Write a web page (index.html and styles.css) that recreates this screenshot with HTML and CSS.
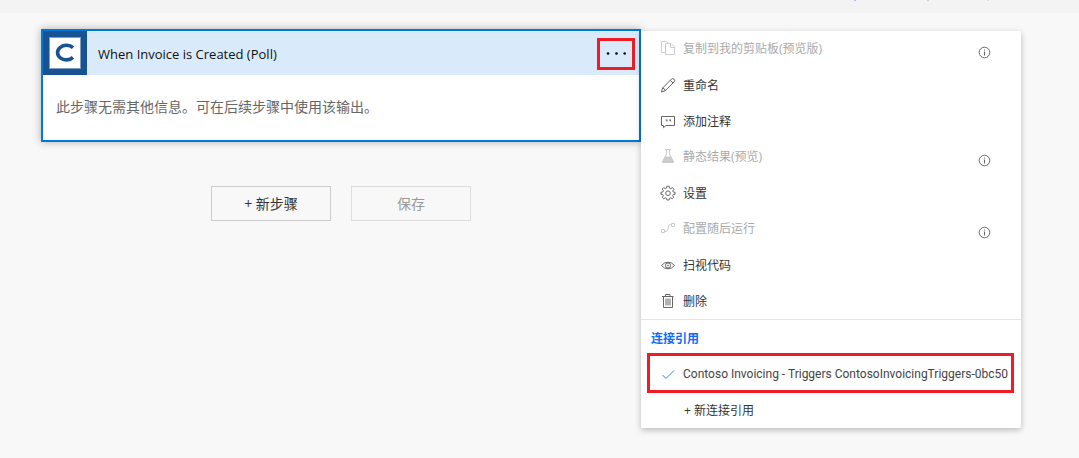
FILE: index.html
```html
<!DOCTYPE html>
<html lang="zh-CN">
<head>
<meta charset="utf-8">
<title>When Invoice is Created (Poll)</title>
<meta name="viewport" content="width=device-width, initial-scale=1">
<link rel="stylesheet" href="styles.css">
</head>
<body>
<header class="topbar"><i class="tick tick-blue"></i><i class="tick"></i><i class="tick tick-faint"></i></header>
<main class="designer">
  <div class="flow">
    <section class="card">
      <header class="card-header">
        <svg class="logo" viewBox="0 0 44 44" aria-hidden="true">
          <rect width="44" height="44" fill="#175293"/>
          <rect x="6" y="6" width="32" height="32" fill="#7f9dc2"/>
          <rect x="7" y="7" width="30" height="30" fill="#fff"/>
          <path d="M30 16.800A8.800 7.300 0 1 0 30 26.400" fill="none" stroke="#175293" stroke-width="3.600"/>
        </svg>
        <h1 class="card-title">When Invoice is Created (Poll)</h1>
        <button class="more" type="button" aria-label="更多">
          <svg width="20" height="4" viewBox="0 0 20 4"><circle cx="2" cy="1.500" r="1.300"/><circle cx="10.500" cy="1.500" r="1.300"/><circle cx="18.700" cy="1.500" r="1.300"/></svg>
        </button>
      </header>
      <p class="card-body">此步骤无需其他信息。可在后续步骤中使用该输出。</p>
    </section>
    <div class="actions">
      <button class="action" type="button">+ 新步骤</button>
      <button class="action" type="button" disabled>保存</button>
    </div>
  </div>
  <div class="menu">
    <div class="group">
      <button class="item" type="button" disabled>
        <svg class="icon" viewBox="0 0 16 16"><path d="M5.500 12.500H1.500V1.500H6.500L8.500 3.500M5.500 3.500H11L14.500 7V14.500H5.500ZM10.500 3.500V7.500H14.500"/></svg>
        <span class="label">复制到我的剪贴板(预览版)</span>
        <svg class="info" viewBox="0 0 13 13"><circle cx="6.500" cy="6.500" r="5.300"/><path d="M6.500 5.500V9.500M6.500 3.500V4.500"/></svg>
      </button>
      <button class="item" type="button">
        <svg class="icon" viewBox="0 0 16 16"><path d="M1.500 15L2.600 11L11.500 2.100Q12.800 1 14.100 2.200Q15.300 3.500 14.200 4.800L5.300 13.700ZM10.300 3.300L13 6M2.600 11Q4.800 11.400 5.300 13.700"/></svg>
        <span class="label">重命名</span>
      </button>
      <button class="item" type="button">
        <svg class="icon" viewBox="0 0 16 16"><path d="M1.500 3.500H14.500V12.500H6L3.500 14.700V12.500H1.500Z"/><path d="M5.500 7H7.500M6.900 7V8.500M9 7H11M10.400 7V8.500"/></svg>
        <span class="label">添加注释</span>
      </button>
      <button class="item" type="button" disabled>
        <svg class="icon" viewBox="0 0 16 16"><path d="M5 1.500H11M6.500 1.500V6L2.500 14H13.500L9.500 6V1.500"/><path class="solid" d="M5 9H11L13.700 14.500H2.300Z"/></svg>
        <span class="label">静态结果(预览)</span>
        <svg class="info" viewBox="0 0 13 13"><circle cx="6.500" cy="6.500" r="5.300"/><path d="M6.500 5.500V9.500M6.500 3.500V4.500"/></svg>
      </button>
      <button class="item" type="button">
        <svg class="icon" viewBox="0 0 16 16"><path d="M6.800 1.300H9.200L9.600 3.200L10.800 3.700L12.400 2.600L14 4.300L12.800 5.900L13.200 7L15 7.300V9.300L13.200 9.600L12.700 10.800L13.700 12.400L12.200 13.900L10.600 12.800L9.500 13.300L9.100 15H6.900L6.500 13.300L5.400 12.800L3.800 13.900L2.300 12.400L3.300 10.800L2.800 9.600L1 9.300V7.300L2.800 7L3.300 5.700L2.200 4.100L3.700 2.600L5.300 3.700L6.400 3.200Z"/><circle cx="8" cy="8.200" r="2.300"/></svg>
        <span class="label">设置</span>
      </button>
      <button class="item" type="button" disabled>
        <svg class="icon" viewBox="0 0 16 16"><path d="M1.500 9.500H4.500V12.500H1.500ZM11.500 3.500H14.500V6.500H11.500ZM4.500 11.500H6Q7.200 11.500 7.600 10L8.800 6Q9.200 4.500 10.400 4.500H11.500"/></svg>
        <span class="label">配置随后运行</span>
        <svg class="info" viewBox="0 0 13 13"><circle cx="6.500" cy="6.500" r="5.300"/><path d="M6.500 5.500V9.500M6.500 3.500V4.500"/></svg>
      </button>
      <button class="item" type="button">
        <svg class="icon" viewBox="0 0 16 16"><path d="M1.500 8.500Q4 5.200 8 5.200T14.500 8.500Q12 11.800 8 11.800T1.500 8.500Z"/><circle cx="8" cy="8.500" r="2.600"/><circle class="solid" cx="8" cy="8.500" r=".4"/></svg>
        <span class="label">扫视代码</span>
      </button>
      <button class="item" type="button">
        <svg class="icon" viewBox="0 0 16 16"><path d="M2 3.500H13.500M5.500 3.500V1.500H10V3.500M3.500 3.500V14.500H12.500V3.500M6 5.500V12.500M8 5.500V12.500M10 5.500V12.500"/></svg>
        <span class="label">删除</span>
      </button>
    </div>
    <div class="group connections">
      <h2 class="menu-heading">连接引用</h2>
      <button class="item selected" type="button">
        <svg class="icon check" viewBox="0 0 16 16"><path d="M2.500 9L6 12.500L14 4.500"/></svg>
        <span class="label">Contoso Invoicing - Triggers ContosoInvoicingTriggers-0bc50</span>
      </button>
      <button class="item new-item" type="button"><span class="label">+ 新连接引用</span></button>
    </div>
  </div>
</main>
</body>
</html>
```
FILE: styles.css
```css
* {
  box-sizing: border-box;
}

body {
  margin: 0;
  min-height: 100vh;
  background: #f8f8f8;
  color: #333;
  font-family: "Open Sans", "Noto Sans CJK SC", sans-serif;
  font-size: 12px;
}

button {
  border: 0;
  padding: 0;
  background: none;
  color: inherit;
  font: inherit;
}

.topbar {
  display: flex;
  justify-content: flex-end;
  gap: 58px;
  height: 13px;
  padding-right: 90px;
  background: #f3f3f3;
}

.tick {
  width: 2px;
  height: 1px;
  background: #ccc;
}

.tick-blue {
  margin-right: 13px;
  background: #b9b3ff;
}

.tick-faint {
  background: #ddd;
}

.designer {
  display: flex;
  align-items: flex-start;
  padding: 16px 58px 30px 41px;
}

.flow {
  flex: 30 1 0;
}

.card {
  border: 2px solid #0078d7;
  background: #fff;
  box-shadow: 0 0 8px rgba(0, 0, 0, 0.3);
}

.card-header {
  display: flex;
  align-items: center;
  background: #d9ebfb;
}

.logo {
  width: 44px;
  height: 44px;
}

.card-title {
  flex: 1;
  margin: 0 0 0 11px;
  padding-top: 2px;
  color: #111;
  font-size: 13px;
  font-weight: 400;
}

.more {
  display: flex;
  align-items: center;
  justify-content: center;
  width: 38px;
  height: 32px;
  margin: 2px 4px 0 0;
  border: 3px solid #ee1c25;
}

.card-body {
  margin: 0;
  padding: 22px 13px 23px;
  color: #666;
  font-size: 14px;
  line-height: 20px;
}

.actions {
  display: flex;
  justify-content: center;
  gap: 20px;
  margin-top: 44px;
}

.action {
  height: 35px;
  width: 120px;
  padding-bottom: 2px;
  border: 1px solid #ccc;
  font-size: 14px;
}

.action:disabled {
  border-color: #ddd;
  color: #999;
}

.menu {
  position: relative;
  flex: 19 1 0;
  margin-top: 2px;
  background: #fff;
  border-radius: 0 2px 2px 0;
  box-shadow: 0 2px 6px rgba(0, 0, 0, 0.25);
}

.item {
  position: relative;
  display: flex;
  align-items: center;
  width: 100%;
  height: 36px;
  padding: 0 30px 0 19px;
  text-align: left;
  white-space: nowrap;
}

.item:disabled {
  padding-bottom: 2px;
  color: #aaa;
}

.label {
  flex: 1;
  margin-left: 7px;
}

.icon,
.info {
  flex: none;
  fill: none;
  stroke: #666;
  stroke-width: 1;
}

.icon {
  width: 16px;
  height: 16px;
}

.item:disabled .icon {
  stroke: #ccc;
}

.icon .solid {
  fill: #666;
}

.item:disabled .solid {
  fill: #ccc;
}

.info {
  width: 13px;
  height: 13px;
  margin-top: 8px;
}

.connections {
  border-top: 1px solid #e5e5e5;
}

.menu-heading {
  margin: 0;
  padding: 1px 0 0 10px;
  color: #0b6cff;
  font-size: 12px;
  font-weight: 700;
  line-height: 35px;
}

.selected {
  padding-right: 0;
  color: #444;
  font-family: Roboto, "Noto Sans CJK SC", sans-serif;
  line-height: 16px;
}

.selected::after {
  content: "";
  position: absolute;
  inset: -3px 7px -1px 6px;
  border: 3px solid #ee1c25;
}

.item .check {
  stroke: #2b88d8;
}

.new-item {
  padding-left: 36px;
}
```
